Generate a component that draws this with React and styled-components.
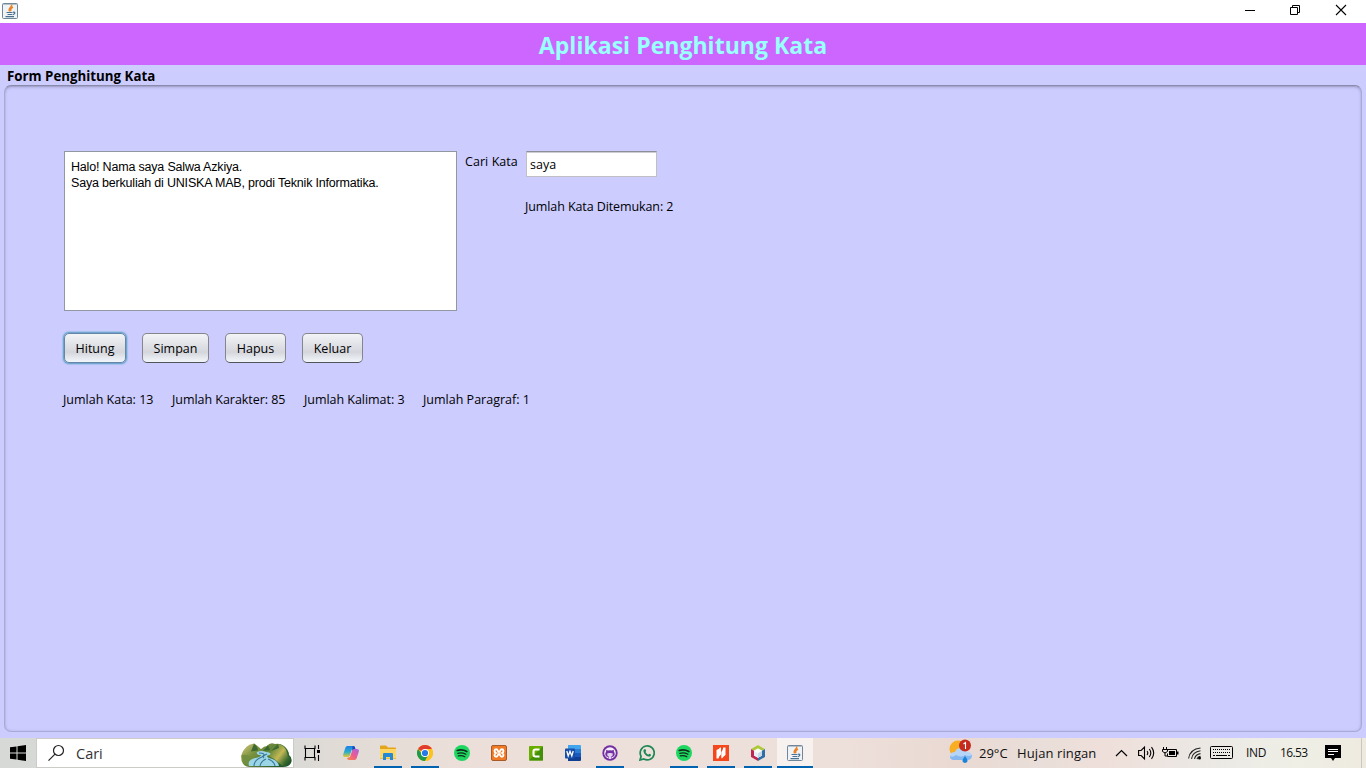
import React from "react";
import styled, { createGlobalStyle, css } from "styled-components";

const GlobalStyle = createGlobalStyle`
  * { box-sizing: border-box; }
  html, body { margin: 0; padding: 0; }
  body {
    width: 1366px;
    height: 768px;
    overflow: hidden;
    font-family: "Open Sans", "Noto Sans", sans-serif;
    font-size: 12.5px;
    color: #000;
    background: #ccccff;
  }
`;

const Window = styled.div`
  width: 1366px;
  height: 768px;
  display: flex;
  flex-direction: column;
`;

const TitleBar = styled.header`
  height: 23px;
  flex: none;
  display: flex;
  justify-content: space-between;
  background: #fff;
  padding: 3px 0 0 2px;
`;

const WindowControls = styled.div`
  display: flex;
  height: 16px;
  padding-right: 19px;
  gap: 34px;
`;

const Text = styled.span`
  display: block;
  white-space: pre;
  line-height: 18px;
  letter-spacing: ${(p) => p.$ls || 0}px;
`;

const Banner = styled.div`
  height: 42px;
  flex: none;
  display: flex;
  justify-content: center;
  background: #cc66ff;
`;

const BannerTitle = styled.h1`
  margin: 0;
  padding-top: 4px;
  font-size: 23px;
  line-height: 36px;
  font-weight: 700;
  color: #99ffff;
  letter-spacing: 0.03px;
  white-space: pre;
`;

const Body = styled.main`
  height: 673px;
  flex: none;
  padding: 2px 4px 6px;
  display: flex;
  flex-direction: column;
`;

const GroupTitle = styled(Text)`
  font-weight: 700;
  font-size: 13.3px;
  padding-left: 3px;
  height: 18px;
`;

const GroupBox = styled.section`
  flex: 1;
  border: 1px solid #a9a9d3;
  border-top: 1px solid #8a8aad;
  border-radius: 7px;
  box-shadow: inset 0 1px 1px #a4a4ce, inset 0 2px 3px #b9b9e8, inset 0 0 3px #b4b4e2;
  padding: 65px 0 0 57px;
`;

const TopRow = styled.div`
  display: flex;
  padding-left: 2px;
`;

const TextArea = styled.div`
  width: 393px;
  height: 160px;
  background: #fff;
  border: 1px solid #9297a1;
  padding: 7px 6px;
  font-family: "Liberation Sans", Arial, sans-serif;
  font-size: 12.5px;
`;

const AreaLine = styled(Text)`
  line-height: 16px;
`;

const SearchLabel = styled(Text)`
  width: 61px;
  margin-left: 8px;
  padding-top: 2px;
`;

const SearchColumn = styled.div`
  display: flex;
  flex-direction: column;
  gap: 21px;
`;

const SearchInput = styled.div`
  width: 131px;
  height: 26px;
  background: #fff;
  border: 1px solid #c0c0c4;
  border-top-color: #8d8e98;
  box-shadow: inset 0 1px 0 #cdced1;
  padding: 4px 3px;
`;

const FoundCount = styled.div`
  margin-left: -1px;
`;

const Buttons = styled.div`
  display: flex;
  gap: 16px;
  margin: 22px 0 0 2px;
`;

const Button = styled.button`
  width: ${(p) => p.$w}px;
  height: 30px;
  margin: 0;
  padding: 0;
  border: 1px solid #85868b;
  border-bottom-color: #505459;
  border-radius: 5px;
  font: inherit;
  display: flex;
  align-items: center;
  justify-content: center;
  background: linear-gradient(#f3f4f6 0%, #e2e4e8 35%, #d4d6dc 65%, #e6e9ee 85%, #f2f5fa 100%);
  ${(p) =>
    p.$focused &&
    css`
      border-color: #6487a8;
      box-shadow: 0 0 0 1px #73a4d1, 0 0 1px 2px #a4c0e8;
    `}
`;

const Stats = styled.div`
  display: flex;
  margin: 28px 0 0 1px;
`;

const Stat = styled(Text)`
  width: ${(p) => p.$w}px;
`;

const Taskbar = styled.footer`
  height: 30px;
  flex: none;
  display: flex;
  background: linear-gradient(90deg, #d6d9d6 0%, #d8dad7 20%, #e1dbd5 25%, #ecdfd9 34%, #eddfd9 45%, #eddfda 62%, #ead9d3 70%, #e9ded9 76%, #efdfda 81%, #ebe8e4 88%, #efefe6 95%, #eeeadf 100%);
`;

const StartButton = styled.div`
  width: 36px;
  padding: 7px 0 0 10px;
`;

const SearchBox = styled.div`
  width: 258px;
  height: 30px;
  background: #fff;
  border: 1px solid #cccbc7;
  display: flex;
  padding: 0 0 0 11px;
`;

const SearchText = styled(Text)`
  font-size: 14.5px;
  line-height: 29px;
  color: #333;
  width: 175px;
  padding-left: 11px;
`;

const Apps = styled.nav`
  display: flex;
  margin-left: 1px;
`;

const AppSlot = styled.div`
  width: 37px;
  height: 30px;
  display: flex;
  flex-direction: column;
  justify-content: space-between;
  padding: 7px 0 0 ${(p) => (p.$shifted ? 9 : 11)}px;
  background: ${(p) => (p.$active ? "linear-gradient(90deg, transparent 0 1px, #f7f2ef 1px)" : "none")};
`;

const RunningMark = styled.div`
  width: ${(p) => (p.$active ? 36 : 28)}px;
  height: 2px;
  margin-left: ${(p) => (p.$active ? -10 : -6)}px;
  background: #0063b1;
`;

const Tray = styled.div`
  flex: 1;
  display: flex;
  justify-content: flex-end;
`;

const TrayItem = styled.div`
  width: ${(p) => p.$w}px;
  height: 30px;
  padding-top: ${(p) => p.$top || 0}px;
`;

const TrayText = styled(Text)`
  font-size: ${(p) => p.$size || 13}px;
  line-height: 30px;
  color: #111;
`;

const ShowDesktop = styled.div`
  width: 5px;
  border-left: 1px solid #c9c7bf;
  margin-left: 20px;
`;

const Drawing = styled.svg`
  display: block;
  flex: none;
`;

const Svg = ({ w = 16, h = 16, children }) => (
  <Drawing width={w} height={h} viewBox={`0 0 ${w} ${h}`} fill="none">
    {children}
  </Drawing>
);

const JavaIcon = () => (
  <Svg>
    <rect x=".5" y=".5" width="15" height="15" rx="1" fill="#eff3f5" stroke="#6f8798" />
    <path d="M1 1.5h14" stroke="#b4c2cc" />
    <path d="M9.500 1.500C11 4 5.600 4.800 7.600 8.300M11 4C8.600 5.200 8 6.300 8.900 8.200" stroke="#e98228" strokeWidth="1.500" />
    <path d="M4.500 9.500h6M5.500 11.500h4.500M3.500 13.700h8.500M11 9.300c2.700-.6 2.200 1.900-.4 2.400" stroke="#4a7192" strokeWidth="1.200" />
  </Svg>
);

const icons = {
  taskView: (
    <Svg>
      <path d="M1 .5v3h10v-3M1 15.5v-3h10v3M1.500 3.500v9M10.500 3.500v9M14.500 0v4M14.500 10v6" stroke="#000" strokeWidth="1.100" />
      <path d="M13 5h3v3h-3z" fill="#000" />
    </Svg>
  ),
  copilot: (
    <Svg>
      <defs>
        <linearGradient id="cpA" x1="0" y1="0" x2="0" y2="1"><stop stopColor="#1c7fe8" /><stop offset=".55" stopColor="#29afcc" /><stop offset="1" stopColor="#edc629" /></linearGradient>
        <linearGradient id="cpB" x1="1" y1="0" x2="0" y2="1"><stop stopColor="#a364e7" /><stop offset=".5" stopColor="#ed5a91" /><stop offset="1" stopColor="#fa8b3b" /></linearGradient>
      </defs>
      <path d="M5 1h5c1.200 0 1.600.8 2 2L9 4 7 10c-.5 1.500-1 2-2.500 2H2C.3 12-.2 10.700.3 9L2.300 3C2.800 1.600 3.600 1 5 1z" fill="url(#cpA)" />
      <path d="M11 15H6c-1.200 0-1.600-.8-2-2l3-1 2-6c.5-1.500 1-2 2.500-2H14c1.700 0 2.200 1.300 1.700 3l-2 6c-.5 1.400-1.300 2-2.700 2z" fill="url(#cpB)" />
      <path d="M9.500 1h1c1.200 0 1.500 1 2 3h-1C10 4 9.500 5 9 6z" fill="#194ec1" />
    </Svg>
  ),
  explorer: (
    <Svg>
      <path d="M0 1.500q0-1 1-1h5l2 2h7q1 0 1 1V14H0z" fill="#e4a51d" />
      <path d="M0 4h16v9.500H0z" fill="#ffd767" />
      <path d="M3 15V9q0-1 1-1h8q1 0 1 1v6h-3v-3H6v3z" fill="#2689d5" />
    </Svg>
  ),
  chrome: (
    <Svg>
      <circle cx="8" cy="8" r="8" fill="#fcc31e" />
      <path d="M8 8L1.070 4A8 8 0 0 1 14.930 4z" fill="#e33b2e" />
      <path d="M8 8H4.200L1.070 4A8 8 0 0 0 8 16l3.300-6z" fill="#21994a" />
      <path d="M8 4h6.930A8 8 0 0 1 8 16l3.500-6z" fill="#fcc31e" />
      <circle cx="8" cy="8" r="4" fill="#fff" /><circle cx="8" cy="8" r="3.100" fill="#2878e8" />
    </Svg>
  ),
  spotify: (
    <Svg>
      <circle cx="8" cy="8" r="8" fill="#1ed760" />
      <path d="M3.200 5.500c3.200-1 6.800-.6 9.600 1" stroke="#102d1b" strokeWidth="1.700" strokeLinecap="round" />
      <path d="M3.800 8.300c2.800-.8 5.700-.4 8.100.9M4.300 10.900c2.300-.6 4.700-.3 6.600.8" stroke="#102d1b" strokeWidth="1.300" strokeLinecap="round" />
    </Svg>
  ),
  xampp: (
    <Svg>
      <rect x=".5" y=".5" width="15" height="15" rx="1.500" fill="#ef7925" stroke="#a65b29" />
      <path d="M5 8C2.800 7 3.200 4.300 5.200 4.300 7.300 4.300 6.500 7 8 7s.7-2.700 2.800-2.700c2 0 2.400 2.700.2 3.700 2.200 1 1.800 3.700-.2 3.700C8.700 11.700 9.500 9 8 9s-.7 2.700-2.800 2.700C3.200 11.700 2.800 9 5 8z" stroke="#fff" strokeWidth="1.900" />
    </Svg>
  ),
  camtasia: (
    <Svg>
      <rect x="1" y="1" width="14" height="14.500" rx="1" fill="#68ad00" />
      <path d="M1 15.500L15 1v14.500z" fill="#438f08" />
      <path d="M11.500 4.500H7.500q-2 0-2 2v3q0 2 2 2h4" stroke="#fff" strokeWidth="2.100" />
    </Svg>
  ),
  word: (
    <Svg>
      <path d="M3 0h12q1 0 1 1v3H3z" fill="#41a5ee" /><path d="M3 4h13v4H3z" fill="#2b7cd3" /><path d="M3 8h13v4H3z" fill="#185abd" /><path d="M3 12h13v3q0 1-1 1H3z" fill="#103f91" />
      <rect y="3.500" width="10" height="10" rx=".8" fill="#174fa8" />
      <path d="M1.800 6l1.400 5L5 6.300 6.800 11l1.400-5" stroke="#fff" strokeWidth="1.300" />
    </Svg>
  ),
  github: (
    <Svg>
      <circle cx="8" cy="8" r="7.700" fill="#7430a2" /><circle cx="8" cy="8" r="5.800" fill="#f7eff9" />
      <path d="M6.200 14v-2c-2.100-.1-2.900-1.300-2.900-3 0-1 .2-1.700.8-2.300l.1-2 1.800.8q2-.4 4 0l1.800-.8.1 2c.6.600.8 1.300.8 2.300 0 1.700-.8 2.900-2.900 3v2z" fill="#7430a2" />
      <path d="M6.700 14v-2.500q-1.900-.7-1.500-3 1.200-.7 2.800-.4 1.600-.3 2.800.4.4 2.300-1.500 3V14z" fill="#f7eff9" opacity=".85" />
    </Svg>
  ),
  whatsapp: (
    <Svg>
      <path d="M1 15l1.100-3.700A7 7 0 1 1 4.800 14z" stroke="#1b8755" strokeWidth="1.700" />
      <path d="M5.300 4.200l1.200.1.700 1.800-.8 1q1 1.800 2.800 2.600l1-1 1.800.9c.2 1.600-1.200 2.200-2.400 2C7 11 4.700 8.500 4.400 6.200q0-1.400.9-2z" fill="#1b8755" />
    </Svg>
  ),
  nitro: (
    <Svg>
      <rect width="16" height="16" fill="#f4471d" />
      <path d="M3.500 5Q6 4.500 7.300 2.300L8 3v6.500Q6 11 5.500 13.500H3.500z" fill="#fff" />
      <path d="M12.500 2.500V10Q10.500 11 9 13.500L8.300 12.800V7Q10 5 10.300 2.500z" fill="#fff" />
    </Svg>
  ),
  netbeans: (
    <Svg>
      <path d="M8 0l7 4v8l-7 4-7-4V4z" fill="#fff" />
      <path d="M8 0l7 4-3 1.700L8 3.500 4 5.700 1 4z" fill="#aec73b" />
      <path d="M1 4l3 1.700v4.700L8 12.700V16l-7-4z" fill="#bd2851" />
      <path d="M15 4l-3 1.700v4.700L8 12.700V16l7-4z" fill="#326ea4" />
      <path d="M4 5.700L8 8l4-2.300v4.700l-4 2.300-4-2.300z" fill="#e6eef5" /><path d="M8 8v4.700l4-2.300V5.700z" fill="#c7d9e9" />
      <path d="M8 3.500l4 2.200L8 8 4 5.700z" fill="#f8faf5" />
    </Svg>
  ),
  java: <JavaIcon />,
};

const apps = [
  ["taskView"], ["copilot"], ["explorer", 1], ["chrome", 1], ["spotify"], ["xampp"], ["camtasia"],
  ["word"], ["github", 1], ["whatsapp"], ["spotify", 1], ["nitro", 1], ["netbeans", 1], ["java", 1, 1],
];

const Landscape = () => (
  <Svg w={53} h={28}>
    <defs>
      <linearGradient id="hillA" x1="0" y1="0" x2="1" y2=".6"><stop stopColor="#dccb83" /><stop offset=".35" stopColor="#7d9440" /><stop offset="1" stopColor="#20592c" /></linearGradient>
      <linearGradient id="hillB" x1="0" y1=".3" x2="1" y2="1"><stop stopColor="#4a7a31" /><stop offset=".45" stopColor="#c3b856" /><stop offset=".75" stopColor="#3b6b30" /><stop offset="1" stopColor="#123f22" /></linearGradient>
    </defs>
    <path d="M1 17Q4 6 14 4.500q5 3 7 5.500 3-3 6-3 3-4 8-2 5-1 9 2 5 4 5 9 4 3 2 8-2 4-8 4H9Q1 27 1 17z" fill="url(#hillA)" />
    <path d="M30 11q5-5 9-6 5 2 7 6l2 6q4 3 3 6-2 4-9 4-6-7-15-11z" fill="url(#hillB)" />
    <path d="M14 4.500l-3 8 7-1q0-4-4-7zM28 6l-5 6 7-1zM38 5l-7 7 8-3z" fill="#2f612f" opacity=".85" />
    <path d="M2 16q6-1 9 3l-3 7Q2 24 2 16z" fill="#718f3f" />
    <path d="M17 13q5-2 9 0 7 1 3 3-4 1 0 3 9 2 10 8H9q-2-6 6-8 6-1 6-3-5 0-4-3z" fill="#9bd5e6" />
    <path d="M19 14q8 0 3 4-8 3-8 9M26 20q-5 2-6 7M28 20q6 2 7 7M27 15q-5 2-3 4" stroke="#3a789a" strokeWidth="1.100" />
  </Svg>
);

const Weather = () => (
  <Svg w={24} h={26}>
    <circle cx="9" cy="10" r="8.500" fill="#f8ae23" />
    <path d="M5 21q-4 0-4-4t5-4q1-4 6-4 5 0 6 4 5 0 5 4t-5 4z" fill="#b5d4f8" />
    <path d="M5 21q-4 0-4-4 3 2 6-1 6 3 9 0 3 2 7 0 0 5-5 5z" fill="#86b7ee" />
    <path d="M16 17q5 6 0 7-5-1 0-7z" fill="#1784dc" />
    <circle cx="16" cy="6.500" r="6" fill="#c62b20" />
    <path d="M14.500 5l2-1.500V10" stroke="#fff" strokeWidth="1.100" />
  </Svg>
);

export default function App() {
  return (
    <Window>
      <GlobalStyle />
      <TitleBar>
        <JavaIcon />
        <WindowControls>
          <Svg w={11}><path d="M0 7.500h10" stroke="#000" /></Svg>
          <Svg w={11}><path d="M.5 4.500h7v7h-7zM2.500 4.500v-2h7v7h-2" stroke="#000" /></Svg>
          <Svg w={12}><path d="M1 2l10 10M11 2L1 12" stroke="#000" strokeWidth="1.100" /></Svg>
        </WindowControls>
      </TitleBar>
      <Banner><BannerTitle>Aplikasi Penghitung Kata</BannerTitle></Banner>
      <Body>
        <GroupTitle>Form Penghitung Kata</GroupTitle>
        <GroupBox>
          <TopRow>
            <TextArea>
              <AreaLine $ls={-0.185}>Halo! Nama saya Salwa Azkiya.</AreaLine>
              <AreaLine $ls={-0.19}>Saya berkuliah di UNISKA MAB, prodi Teknik Informatika.</AreaLine>
            </TextArea>
            <SearchLabel $ls={0.06}>Cari Kata</SearchLabel>
            <SearchColumn>
              <SearchInput><Text>saya</Text></SearchInput>
              <FoundCount><Text $ls={-0.1}>Jumlah Kata Ditemukan: 2</Text></FoundCount>
            </SearchColumn>
          </TopRow>
          <Buttons>
            <Button $w={62} $focused>Hitung</Button>
            <Button $w={67}>Simpan</Button>
            <Button $w={61}>Hapus</Button>
            <Button $w={61}>Keluar</Button>
          </Buttons>
          <Stats>
            <Stat $w={109}>Jumlah Kata: 13</Stat>
            <Stat $w={132} $ls={-0.04}>Jumlah Karakter: 85</Stat>
            <Stat $w={119} $ls={-0.04}>Jumlah Kalimat: 3</Stat>
            <Stat $w={120}>Jumlah Paragraf: 1</Stat>
          </Stats>
        </GroupBox>
      </Body>
      <Taskbar>
        <StartButton>
          <Svg><path d="M0 2.300L6.500 1.400v6.100H0zM7.500 1.200L16 0v7.500H7.500zM0 8.500h6.500v6.100L0 13.700zM7.500 8.500H16V16l-8.500-1.200z" fill="#000" /></Svg>
        </StartButton>
        <SearchBox>
          <Svg w={17} h={28}><circle cx="10.500" cy="11.500" r="5" stroke="#222" strokeWidth="1.200" /><path d="M7 15.200L.5 21.700" stroke="#222" strokeWidth="1.200" /></Svg>
          <SearchText>Cari</SearchText>
          <Landscape />
        </SearchBox>
        <Apps>
          {apps.map(([name, running, active], i) => (
            <AppSlot key={i} $active={active} $shifted={i === 0}>
              {icons[name]}
              {running && <RunningMark $active={active} />}
            </AppSlot>
          ))}
        </Apps>
        <Tray>
          <TrayItem $w={30} $top={1}><Weather /></TrayItem>
          <TrayItem $w={38}><TrayText>29°C</TrayText></TrayItem>
          <TrayItem $w={98}><TrayText $ls={0.1}>Hujan ringan</TrayText></TrayItem>
          <TrayItem $w={23} $top={7}><Svg w={13}><path d="M1 11l5.500-5.500L12 11" stroke="#000" strokeWidth="1.200" /></Svg></TrayItem>
          <TrayItem $w={24} $top={7}>
            <Svg w={17}><path d="M.6 5.500h2.500L6.500 2v12L3.100 10.500H.6zM9 6q1.600 2 0 4M11.300 4q3 4 0 8M13.500 2.200q4.400 5.800 0 11.600" stroke="#000" strokeWidth="1.100" /></Svg>
          </TrayItem>
          <TrayItem $w={26} $top={7}>
            <Svg w={17}><path d="M5 4.500h9.500v7h-9v-3" stroke="#000" /><path d="M7 6h6v4H7zM15 6.500h1.500v3H15z" fill="#000" /><path d="M1.500 2v2M4.500 2v2M.5 4.500h5v2q-2.500 3-5 0zM3 7v4h2" stroke="#000" /></Svg>
          </TrayItem>
          <TrayItem $w={22} $top={8}>
            <Svg w={14}><path d="M.6 12.500Q2 3 12.500 2M3.500 12.800Q4.500 6 12.500 4.800M6.500 12.800q1-4.500 6-5.200M9 13q.7-2.300 3.500-2.800" stroke="#222" strokeWidth="1.100" /><circle cx="11.500" cy="12" r="1.500" fill="#000" /></Svg>
          </TrayItem>
          <TrayItem $w={36} $top={8}>
            <Svg w={23} h={13}><rect x=".5" y=".5" width="22" height="12" rx="1" stroke="#000" /><path d="M3 3.500h17M3 6.500h17" stroke="#000" strokeDasharray="1 1" /><path d="M3 9.500h2M6 9.500h11M18 9.500h2" stroke="#000" /></Svg>
          </TrayItem>
          <TrayItem $w={34}><TrayText $size={12} $ls={-0.3}>IND</TrayText></TrayItem>
          <TrayItem $w={45}><TrayText $size={12} $ls={-0.65}>16.53</TrayText></TrayItem>
          <TrayItem $w={16} $top={7}>
            <Svg><path d="M0 0h16v13h-6l-2 3-2-3H0z" fill="#000" /><path d="M3 4.500h10M3 6.500h10M3 9.500h6" stroke="#fff" /></Svg>
          </TrayItem>
          <ShowDesktop />
        </Tray>
      </Taskbar>
    </Window>
  );
}
